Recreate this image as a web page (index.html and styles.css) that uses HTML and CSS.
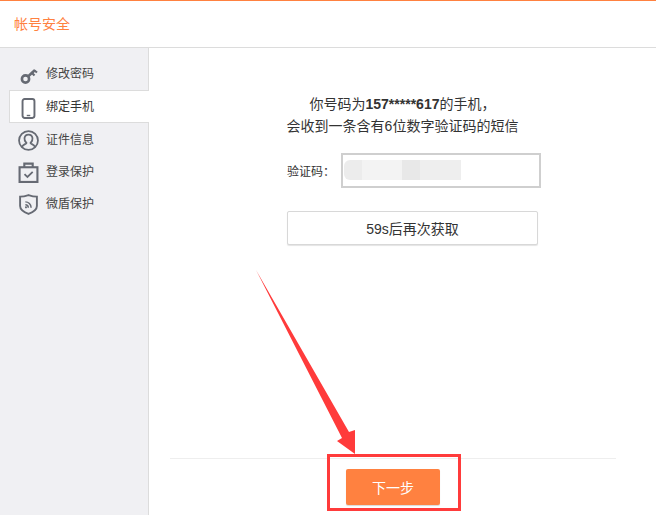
FILE: index.html
```html
<!DOCTYPE html>
<html lang="zh-CN">
<head>
<meta charset="utf-8">
<title>帐号安全</title>
<link rel="stylesheet" href="styles.css">
</head>
<body>
<div class="page">
  <header class="header">帐号安全</header>
  <div class="body">
    <nav class="sidebar">
      <a class="item first">
        <svg class="icon key" viewBox="0 0 20 20"><circle cx="6.5" cy="13.5" r="3.6" fill="none" stroke="#666a73" stroke-width="2.6"/><path d="M9 11 L16 4.5" stroke="#666a73" stroke-width="2.6" fill="none"/><path d="M13 7.5 L15.5 10 M15.5 5 L18 7" stroke="#666a73" stroke-width="2.2" fill="none"/></svg>
        <span class="name">修改密码</span>
      </a>
      <a class="item active">
        <svg class="icon" viewBox="0 0 20 24"><rect x="3.2" y="1.2" width="13.6" height="21.6" rx="2.4" fill="none" stroke="#666a73" stroke-width="2.2"/><path d="M8 20 H12" stroke="#666a73" stroke-width="1.6"/></svg>
        <span class="name">绑定手机</span>
      </a>
      <a class="item">
        <svg class="icon" viewBox="0 0 20 20"><circle cx="10" cy="10" r="9" fill="none" stroke="#666a73" stroke-width="1.7"/><path d="M3.8 16 C5 13.5 7.5 13.5 8 12.4 C6.5 11 6 9.5 6.2 7.8 C6.5 5.6 8 4.5 10 4.5 C12 4.5 13.5 5.6 13.8 7.8 C14 9.5 13.5 11 12 12.4 C12.5 13.5 15 13.5 16.2 16" fill="none" stroke="#666a73" stroke-width="1.7"/></svg>
        <span class="name">证件信息</span>
      </a>
      <a class="item">
        <svg class="icon" viewBox="0 0 20 20"><rect x="1.5" y="5" width="17" height="14" fill="none" stroke="#666a73" stroke-width="2"/><path d="M6 5 V1.5 H14 V5" fill="none" stroke="#666a73" stroke-width="2"/><path d="M6.2 11.5 L9 14.3 L14 9.5" fill="none" stroke="#666a73" stroke-width="1.7"/></svg>
        <span class="name">登录保护</span>
      </a>
      <a class="item">
        <svg class="icon" viewBox="0 0 20 20"><path d="M10 1 C13 2 15.500 2.500 18 2.500 V11.500 C18 15 14 17.500 10 19 C6 17.500 2 15 2 11.500 V2.500 C4.500 2.500 7 2 10 1 Z" fill="none" stroke="#666a73" stroke-width="1.800"/><path d="M7 7.500 C10 7.500 12.500 10 12.500 13 M7 10.300 C8.700 10.300 9.800 11.400 9.800 13" fill="none" stroke="#666a73" stroke-width="1.400"/><circle cx="7.600" cy="12.700" r="1" fill="#666a73"/></svg>
        <span class="name">微盾保护</span>
      </a>
    </nav>
    <main class="main">
      <div class="content">
        <p class="intro">你号码为<b class="num">157*****617</b>的手机，<br>会收到一条含有6位数字验证码的短信</p>
        <div class="form">
          <div class="field">
            <label class="label">验证码<span class="colon">：</span></label>
            <div class="input"><div class="blur"></div></div>
          </div>
          <button class="resend">59s后再次获取</button>
        </div>
      </div>
      <footer class="footer">
        <button class="next">下一步</button>
      </footer>
    </main>
  </div>
  <svg class="overlay" viewBox="0 0 656 515" aria-hidden="true">
    <path d="M256 270 L349 432 L355 430 L355 454 L337 441 L342 438 Z" fill="#ff3b3b"/>
    <rect x="328.500" y="455.500" width="131" height="54" fill="none" stroke="#ff3b3b" stroke-width="3"/>
  </svg>
</div>
</body>
</html>
```
FILE: styles.css
```css
* { box-sizing: border-box; }
html, body { margin: 0; padding: 0; }
body {
  width: 656px;
  height: 515px;
  overflow: hidden;
  background: #fff;
  color: #333;
  font-family: "Liberation Sans", "Noto Sans CJK SC", sans-serif;
}
.page {
  position: relative;
  width: 656px;
  height: 515px;
  display: flex;
  flex-direction: column;
  border-top: 1px solid #ff8140;
}
.header {
  height: 47px;
  flex: none;
  padding-left: 14px;
  line-height: 46px;
  font-size: 14px;
  color: #ff8140;
  border-bottom: 1px solid #dcdcdc;
}
.body { flex: 1; display: flex; min-height: 0; }
.sidebar {
  width: 149px;
  flex: none;
  padding: 9px 0 0 9px;
  background: #f0f0f3;
  border-right: 1px solid #dcdcdc;
}
.item {
  height: 32px;
  display: flex;
  align-items: center;
  gap: 7px;
  padding-left: 9px;
  font-size: 12px;
  color: #444;
}
.name { margin-bottom: 2px; }
.first { height: 33px; }
.active {
  width: 140px;
  height: 33px;
  background: #fff;
  border: 1px solid #dcdcdc;
  border-right: 0;
  padding-left: 8px;
  color: #333;
}
.icon { width: 21px; height: 21px; flex: none; margin-top: 3px; }
.key { width: 20px; margin-left: 1px; }
.main { flex: 1; display: flex; flex-direction: column; min-width: 0; }
.content { flex: 1; display: flex; flex-direction: column; align-items: center; padding-top: 45px; }
.intro { margin: 0; text-align: center; font-size: 14px; line-height: 22px; }
.num { font-family: "Liberation Sans", sans-serif; }
.form { width: 254px; margin: 16px 0 0 23px; }
.field { display: flex; align-items: center; height: 35px; }
.label { width: 54px; font-size: 12px; }
.colon { font-family: "Noto Sans CJK TC", sans-serif; }
.input {
  width: 200px;
  height: 35px;
  flex: none;
  border: 2px solid #cfcfcf;
  background: #fff;
  padding: 5px 0 0 1px;
}
.blur {
  width: 117px;
  height: 20px;
  border-radius: 6px 0 0 6px;
  background: linear-gradient(to right, #ececec 0 15%, #f3f3f3 15% 50%, #e8e8e8 50% 65%, #eeeeee 65% 100%);
}
.resend {
  display: block;
  width: 251px;
  height: 34px;
  margin-top: 23px;
  background: #fff;
  border: 1px solid #d8d8d8;
  border-radius: 2px;
  box-shadow: 0 1px 1px #e4e4e4;
  font: 14px "Liberation Sans", "Noto Sans CJK SC", sans-serif;
  color: #333;
  padding: 0;
}
.footer {
  height: 57px;
  flex: none;
  margin: 0 40px 0 21px;
  border-top: 1px solid #eeeeee;
  display: flex;
  justify-content: center;
  padding-top: 10px;
}
.next {
  width: 94px;
  height: 36px;
  background: #ff8140;
  border: 0;
  border-radius: 2px;
  box-shadow: 0 1px 1px #d9d9d9;
  color: #fff;
  font: 14px "Liberation Sans", "Noto Sans CJK SC", sans-serif;
  padding: 0;
}
.overlay { position: absolute; left: 0; top: -1px; width: 656px; height: 515px; pointer-events: none; }
```
